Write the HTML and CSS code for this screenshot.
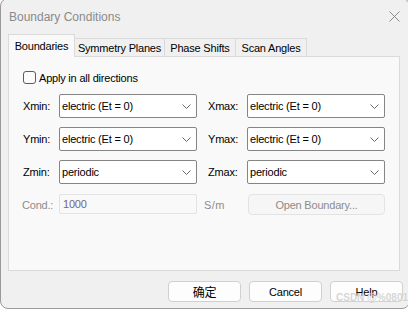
FILE: index.html
```html
<!DOCTYPE html>
<html>
<head>
<meta charset="utf-8">
<link rel="stylesheet" href="styles.css">
</head>
<body>
<div class="window">
  <div class="titlebar">
    <span class="title">Boundary Conditions</span>
    <svg class="close" width="11" height="11" viewBox="0 0 11 11"><path d="M0.5 0.5 L10.5 10.5 M10.5 0.5 L0.5 10.5" stroke="#8a8a8a" stroke-width="1" fill="none"/></svg>
  </div>
  <div class="content">
    <div class="tabs">
      <div class="tab selected">Boundaries</div>
      <div class="tab tab-sym">Symmetry Planes</div>
      <div class="tab tab-phase">Phase Shifts</div>
      <div class="tab tab-scan">Scan Angles</div>
    </div>
    <div class="panel">
      <label class="check"><span class="box"></span><span>Apply in all directions</span></label>
      <div class="grid">
        <span class="lbl">Xmin:</span>
        <div class="combo"><span>electric (Et = 0)</span><svg class="chev" width="9" height="5" viewBox="0 0 9 5"><path d="M0.5 0.5 L4.5 4.5 L8.5 0.5" stroke="#6a6a6a" fill="none"/></svg></div>
        <span class="lbl lbl2">Xmax:</span>
        <div class="combo"><span>electric (Et = 0)</span><svg class="chev" width="9" height="5" viewBox="0 0 9 5"><path d="M0.5 0.5 L4.5 4.5 L8.5 0.5" stroke="#6a6a6a" fill="none"/></svg></div>

        <span class="lbl">Ymin:</span>
        <div class="combo"><span>electric (Et = 0)</span><svg class="chev" width="9" height="5" viewBox="0 0 9 5"><path d="M0.5 0.5 L4.5 4.5 L8.5 0.5" stroke="#6a6a6a" fill="none"/></svg></div>
        <span class="lbl lbl2">Ymax:</span>
        <div class="combo"><span>electric (Et = 0)</span><svg class="chev" width="9" height="5" viewBox="0 0 9 5"><path d="M0.5 0.5 L4.5 4.5 L8.5 0.5" stroke="#6a6a6a" fill="none"/></svg></div>

        <span class="lbl">Zmin:</span>
        <div class="combo"><span>periodic</span><svg class="chev" width="9" height="5" viewBox="0 0 9 5"><path d="M0.5 0.5 L4.5 4.5 L8.5 0.5" stroke="#6a6a6a" fill="none"/></svg></div>
        <span class="lbl lbl2">Zmax:</span>
        <div class="combo"><span>periodic</span><svg class="chev" width="9" height="5" viewBox="0 0 9 5"><path d="M0.5 0.5 L4.5 4.5 L8.5 0.5" stroke="#6a6a6a" fill="none"/></svg></div>

        <span class="lbl dis cond">Cond.:</span>
        <div class="input dis-input">1000</div>
        <span class="lbl lbl-unit dis">S/m</span>
        <div class="dis-btn">Open Boundary...</div>
      </div>
    </div>
    <div class="buttons">
      <div class="btn cjk">确定</div>
      <div class="btn">Cancel</div>
      <div class="btn">Help</div>
    </div>
  </div>
  <div class="watermark">CSDN @%0801</div>
</div>
</body>
</html>
```

FILE: styles.css
```css
html, body {
  margin: 0;
  padding: 0;
  background: #ffffff;
  overflow: hidden;
  width: 408px;
  height: 310px;
}

body {
  font-family: "Liberation Sans", Arial, sans-serif;
  font-size: 11px;
  letter-spacing: -0.2px;
  color: #000;
}

.window {
  position: relative;
  box-sizing: border-box;
  width: 410px;
  height: 311px;
  margin-top: -2px;
  background: #f0f0f0;
  border: 1px solid #9a9a9a;
  border-radius: 8px;
  overflow: hidden;
}

.titlebar {
  height: 33px;
  display: flex;
  align-items: center;
  justify-content: space-between;
  padding: 0 9px 0 8px;
  box-sizing: border-box;
}

.title {
  font-size: 12px;
  letter-spacing: 0;
  color: #8a8a8a;
  padding-top: 2px;
}

.close {
  display: block;
  margin-top: 1px;
}

.content {
  padding-left: 7px;
}

.tabs {
  display: flex;
  align-items: flex-end;
  height: 25px;
  position: relative;
  z-index: 1;
  margin-bottom: -1px;
}

.tab {
  box-sizing: border-box;
  height: 19px;
  padding: 1px 0 0 0;
  display: flex;
  align-items: center;
  justify-content: center;
  white-space: nowrap;
  background: #f0f0f0;
  border: 1px solid #dadada;
  border-left: none;
}

.tab-sym {
  width: 90px;
}

.tab-phase {
  width: 71px;
}

.tab-scan {
  width: 71px;
}

.tab.selected {
  height: 23px;
  width: 67px;
  border-left: 1px solid #dadada;
  border-bottom: none;
  background: #f9f9f9;
  padding-top: 0;
  padding-bottom: 1px;
}

.panel {
  box-sizing: border-box;
  width: 392px;
  height: 215px;
  background: #f9f9f9;
  border: 1px solid #dadada;
  padding: 14px 0 0 14px;
}

.check {
  display: flex;
  align-items: center;
  height: 13px;
  gap: 3px;
}

.box {
  box-sizing: border-box;
  width: 13px;
  height: 13px;
  border: 1px solid #5c5c5c;
  border-radius: 3px;
  background: #fbfbfb;
}

.grid {
  margin-top: 10px;
  display: grid;
  grid-template-columns: 36px 138px 50px 138px;
  grid-auto-rows: 24px;
  row-gap: 9px;
  align-items: center;
}

.lbl {
  align-self: center;
}

.lbl2 {
  padding-left: 11px;
}

.combo {
  box-sizing: border-box;
  height: 24px;
  background: #ffffff;
  border: 1px solid #858585;
  border-radius: 2px;
  display: flex;
  align-items: center;
  justify-content: space-between;
  padding: 0 5px 0 2px;
}

.chev {
  display: block;
}

.dis {
  color: #8c8c8c;
}

.cond {
  margin-left: -1px;
}

.input {
  box-sizing: border-box;
  height: 20px;
  align-self: start;
  margin-top: 1px;
  border: 1px solid #e3e3e3;
  border-radius: 2px;
  background: #f9f9f9;
  color: #6f6880;
  padding: 0 3px;
  display: flex;
  align-items: center;
}

.lbl-unit {
  padding-left: 7px;
  letter-spacing: 0.4px;
}

.dis-btn {
  box-sizing: border-box;
  height: 21px;
  width: 137px;
  margin-left: 1px;
  align-self: start;
  margin-top: 1px;
  border: 1px solid #e3e3e3;
  border-radius: 4px;
  background: #f6f6f6;
  color: #8c8c8c;
  display: flex;
  align-items: center;
  justify-content: center;
}

.buttons {
  width: 395px;
  display: flex;
  justify-content: flex-end;
  gap: 8px;
  margin-top: 10px;
}

.btn {
  box-sizing: border-box;
  width: 73px;
  height: 21px;
  background: #fdfdfd;
  border: 1px solid #d0d0d0;
  border-radius: 4px;
  display: flex;
  align-items: center;
  justify-content: center;
}

.cjk {
  font-family: "Noto Sans CJK SC", "Liberation Sans", sans-serif;
  font-size: 12px;
}

.watermark {
  position: absolute;
  left: 335px;
  top: 293px;
  white-space: nowrap;
  font-size: 10px;
  font-weight: bold;
  letter-spacing: 0;
  color: rgba(170, 170, 170, 0.5);
  text-shadow: 0 0 1px #fff;
}
```
